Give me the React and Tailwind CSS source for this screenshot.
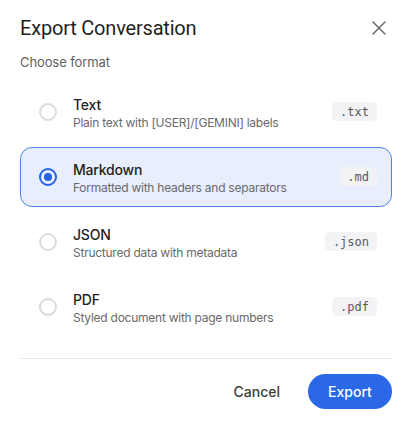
import { useState } from 'react';

const FORMATS = [
  { id: 'txt', title: 'Text', desc: 'Plain text with [USER]/[GEMINI] labels', ext: '.txt' },
  { id: 'md', title: 'Markdown', desc: 'Formatted with headers and separators', ext: '.md' },
  { id: 'json', title: 'JSON', desc: 'Structured data with metadata', ext: '.json' },
  { id: 'pdf', title: 'PDF', desc: 'Styled document with page numbers', ext: '.pdf' },
];

const Radio = ({ checked }) => (
  <span
    className={
      checked
        ? 'flex h-[18px] w-[18px] shrink-0 items-center justify-center rounded-full border-2 border-[#2463e6]'
        : 'flex h-[18px] w-[18px] shrink-0 items-center justify-center rounded-full border-2 border-[#dadada]'
    }
  >
    {checked && <span className="h-[8px] w-[8px] rounded-full bg-[#2463e6]" />}
  </span>
);

export default function App() {
  const [selected, setSelected] = useState('md');

  return (
    <div className="h-[424px] w-[412px] bg-white px-5 font-['Inter',sans-serif] text-[#1f1f1f]">
      {/* Header */}
      <div className="flex h-[54px] items-center justify-between pt-[2px]">
        <h2 className="font-['Roboto',sans-serif] text-[20px] font-normal tracking-[-0.2px] text-[#1f1f1f]">Export Conversation</h2>
        <button className="mr-[6px] text-[#6b6b6b]">
          <svg width="14" height="14" viewBox="0 0 14 14" fill="none" stroke="currentColor" strokeWidth="1.5" strokeLinecap="round">
            <path d="M1 1L13 13M13 1L1 13" />
          </svg>
        </button>
      </div>

      <p className="mt-[-1px] text-[13px] tracking-[-0.1px] text-[#5f5f5f]">Choose format</p>

      {/* Options */}
      <div className="mt-[9px] flex flex-col gap-[5px]">
        {FORMATS.map((f) => {
          const active = selected === f.id;
          return (
            <button
              key={f.id}
              onClick={() => setSelected(f.id)}
              className={
                active
                  ? 'flex h-[60px] items-center rounded-[12px] border border-[#4f83e4] bg-[#e8eefc] pl-[18px] pr-[14px] text-left'
                  : 'flex h-[60px] items-center rounded-[12px] border border-transparent pl-[18px] pr-[14px] text-left'
              }
            >
              <Radio checked={active} />
              <div className="ml-[16px] flex flex-1 flex-col pt-[3px]">
                <span className="text-[14px] font-medium leading-[18px] tracking-[-0.2px] text-[#1f1f1f]">{f.title}</span>
                <span className="text-[12px] leading-[17px] tracking-[-0.25px] text-[#6a6a6a]">{f.desc}</span>
              </div>
              <span className="flex h-[19px] items-center rounded-[5px] bg-[#f3f3f6] px-[8px] font-['DejaVu_Sans_Mono',monospace] text-[12px] text-[#5a5a5a]">
                {f.ext}
              </span>
            </button>
          );
        })}
      </div>

      {/* Footer */}
      <div className="mt-[21px] border-t border-[#e6e6e6] pt-[15px]">
        <div className="flex items-center justify-end gap-[14px]">
          <button className="h-[35px] px-[14px] text-[14px] font-medium text-[#3c3c3c]">Cancel</button>
          <button className="h-[35px] w-[84px] rounded-full bg-[#2a68e7] text-[14px] font-medium text-white">Export</button>
        </div>
      </div>
    </div>
  );
}
